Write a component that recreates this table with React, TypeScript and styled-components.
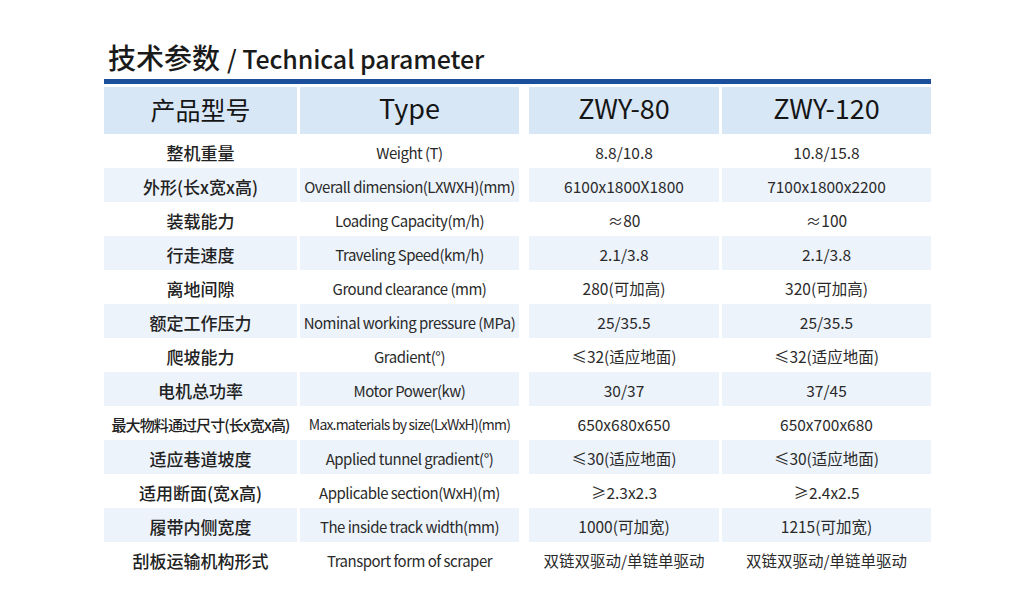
import React from "react";
import styled, { createGlobalStyle } from "styled-components";

const Global = createGlobalStyle`
  html, body { margin: 0; padding: 0; background: #ffffff; }
  body { font-family: "Noto Sans CJK SC", "Noto Sans", sans-serif; color: #222; }
`;

const Page = styled.div`
  width: 1024px;
  height: 610px;
  padding: 40px 0 0 104px;
  box-sizing: border-box;
`;

const Title = styled.h1`
  margin: 0 0 4px 4px;
  font-size: 28px;
  line-height: 34px;
  font-weight: 500;
  color: #1a1a1a;
  display: flex;
  align-items: baseline;
`;

const TitleEn = styled.span`
  font-size: 25px;
  margin-left: 7px;
  letter-spacing: -0.1px;
`;

const Rule = styled.div`
  width: 827px;
  height: 5px;
  background: #1b4f9b;
  margin-bottom: 3px;
`;

const Grid = styled.div`
  display: grid;
  width: 827px;
  grid-template-columns: 193px 219px 197px 209px;
  column-gap: 3px;
`;

const Cell = styled.div<{ $tint?: "head" | "row" | "none"; $shift?: boolean; $h: number }>`
  height: ${(p) => p.$h}px;
  box-sizing: border-box;
  padding-top: 2px;
  margin-left: ${(p) => (p.$shift ? 7 : 0)}px;
  background: ${(p) => (p.$tint === "head" ? "#d8e7f5" : p.$tint === "row" ? "#edf3fa" : "transparent")};
  display: flex;
  align-items: center;
  justify-content: center;
  white-space: nowrap;
  overflow: hidden;
`;

const HeadText = styled.span<{ $latin?: boolean }>`
  font-size: ${(p) => (p.$latin ? 27 : 25)}px;
  font-weight: 400;
  color: #151515;
  margin-top: ${(p) => (p.$latin ? -9 : -6)}px;
`;

const NameText = styled.span<{ $small?: boolean }>`
  font-size: ${(p) => (p.$small ? 15 : 17)}px;
  font-weight: 500;
  color: #222;
  letter-spacing: ${(p) => (p.$small ? -0.9 : 0)}px;
`;

const EnText = styled.span<{ $small?: boolean }>`
  font-size: ${(p) => (p.$small ? 14 : 15)}px;
  font-weight: 400;
  color: #2a2a2a;
  letter-spacing: ${(p) => (p.$small ? -0.8 : -0.5)}px;
`;

const ValText = styled.span`
  font-size: 15.5px;
  font-weight: 400;
  color: #2a2a2a;
`;

type Row = { cn: string; en: string; a: string; b: string; small?: boolean };

const rows: Row[] = [
  { cn: "整机重量", en: "Weight (T)", a: "8.8/10.8", b: "10.8/15.8" },
  { cn: "外形(长x宽x高)", en: "Overall dimension(LXWXH)(mm)", a: "6100x1800X1800", b: "7100x1800x2200" },
  { cn: "装载能力", en: "Loading Capacity(m/h)", a: "≈80", b: "≈100" },
  { cn: "行走速度", en: "Traveling Speed(km/h)", a: "2.1/3.8", b: "2.1/3.8" },
  { cn: "离地间隙", en: "Ground clearance (mm)", a: "280(可加高)", b: "320(可加高)" },
  { cn: "额定工作压力", en: "Nominal working pressure (MPa)", a: "25/35.5", b: "25/35.5" },
  { cn: "爬坡能力", en: "Gradient(°)", a: "≤32(适应地面)", b: "≤32(适应地面)" },
  { cn: "电机总功率", en: "Motor Power(kw)", a: "30/37", b: "37/45" },
  { cn: "最大物料通过尺寸(长x宽x高)", en: "Max.materials by size(LxWxH)(mm)", a: "650x680x650", b: "650x700x680", small: true },
  { cn: "适应巷道坡度", en: "Applied tunnel gradient(°)", a: "≤30(适应地面)", b: "≤30(适应地面)" },
  { cn: "适用断面(宽x高)", en: "Applicable section(WxH)(m)", a: "≥2.3x2.3", b: "≥2.4x2.5" },
  { cn: "履带内侧宽度", en: "The inside track width(mm)", a: "1000(可加宽)", b: "1215(可加宽)" },
  { cn: "刮板运输机构形式", en: "Transport form of scraper", a: "双链双驱动/单链单驱动", b: "双链双驱动/单链单驱动" },
];

export default function App() {
  return (
    <Page>
      <Global />
      <Title>
        技术参数<TitleEn>/ Technical parameter</TitleEn>
      </Title>
      <Rule />
      <Grid>
        <Cell $tint="head" $h={47}><HeadText>产品型号</HeadText></Cell>
        <Cell $tint="head" $h={47}><HeadText $latin>Type</HeadText></Cell>
        <Cell $tint="head" $h={47} $shift><HeadText $latin>ZWY-80</HeadText></Cell>
        <Cell $tint="head" $h={47}><HeadText $latin>ZWY-120</HeadText></Cell>
        {rows.map((r, i) => {
          const t = i % 2 === 1 ? "row" : "none";
          return (
            <React.Fragment key={r.cn}>
              <Cell $tint={t} $h={34}><NameText $small={r.small}>{r.cn}</NameText></Cell>
              <Cell $tint={t} $h={34}><EnText $small={r.small}>{r.en}</EnText></Cell>
              <Cell $tint={t} $h={34} $shift><ValText>{r.a}</ValText></Cell>
              <Cell $tint={t} $h={34}><ValText>{r.b}</ValText></Cell>
            </React.Fragment>
          );
        })}
      </Grid>
    </Page>
  );
}
